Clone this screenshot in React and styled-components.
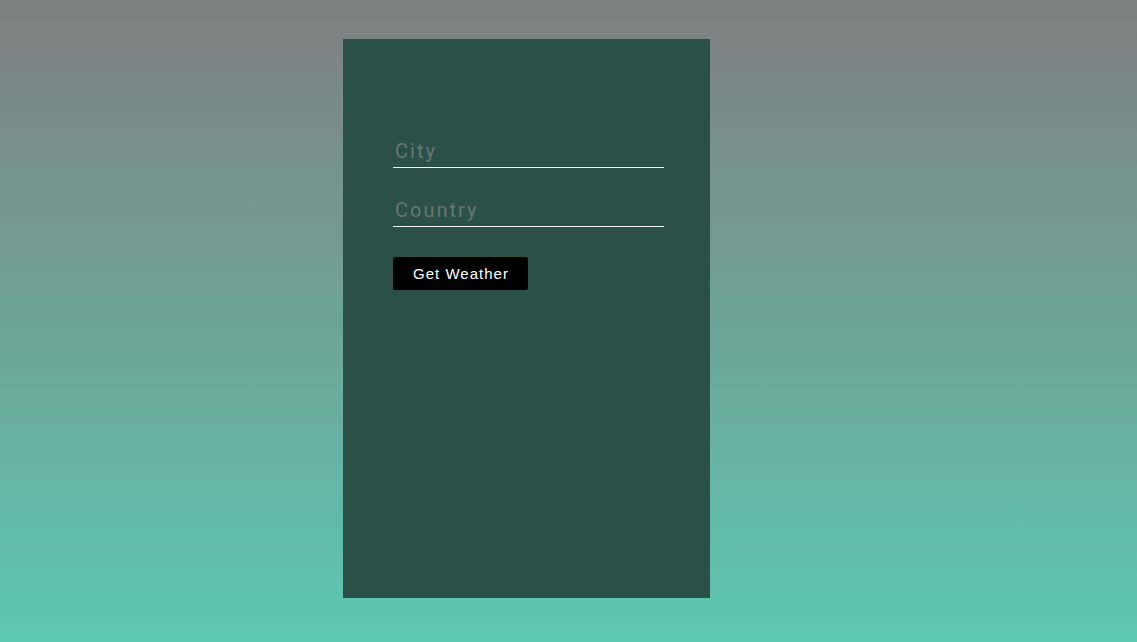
import React from "react";
import styled, { createGlobalStyle } from "styled-components";

const Global = createGlobalStyle`
  html, body { margin: 0; padding: 0; }
  body {
    min-height: 642px;
    background: linear-gradient(to bottom, #7f7f7f 0%, #5cc8b2 100%);
    font-family: "Liberation Sans", Arial, sans-serif;
  }
`;

const Page = styled.div`
  height: 642px;
  box-sizing: border-box;
  padding: 39px 0 0 343px;
`;

const Card = styled.div`
  width: 367px;
  height: 559px;
  background: #2b5048;
  box-sizing: border-box;
  padding: 98px 46px 0 50px;
`;

const Form = styled.form`
  display: flex;
  flex-direction: column;
  align-items: flex-start;
`;

const Input = styled.input`
  width: 271px;
  height: 31px;
  box-sizing: border-box;
  margin: 0 0 ${(p) => p.$gap}px 0;
  padding: 0 2px 2px 2px;
  border: none;
  border-bottom: 1px solid #f2f2f2;
  background: transparent;
  outline: none;
  color: #e0e0e0;
  font-family: Roboto, "Liberation Sans", Arial, sans-serif;
  font-size: 20px;
  letter-spacing: 2px;
  &::placeholder { color: #67776f; }
`;

const Button = styled.button`
  height: 33px;
  width: 135px;
  padding: 0 0 0 1px;
  border: none;
  border-radius: 2px;
  background: #000;
  color: #fff;
  font-family: "Liberation Sans", Arial, sans-serif;
  font-size: 15px;
  letter-spacing: 1px;
  cursor: pointer;
`;

export default function App() {
  return (
    <>
      <Global />
      <Page>
        <Card>
          <Form onSubmit={(e) => e.preventDefault()}>
            <Input $gap={28} placeholder="City" />
            <Input $gap={30} placeholder="Country" />
            <Button type="submit">Get Weather</Button>
          </Form>
        </Card>
      </Page>
    </>
  );
}
